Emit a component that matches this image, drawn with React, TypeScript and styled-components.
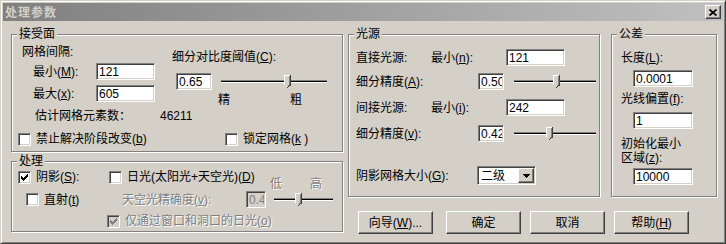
import React from "react";
import styled, { createGlobalStyle, css } from "styled-components";

const face = "#d4d0c8";

const GlobalStyle = createGlobalStyle`
  html, body { margin: 0; padding: 0; background: ${face}; }
  body {
    font-family: "Liberation Sans", "Noto Sans CJK SC", sans-serif;
    font-size: 12px;
    line-height: 14px;
    color: #000;
  }
  u { text-underline-offset: 1px; }
`;

const sunken = css`
  box-sizing: border-box;
  border: 1px solid;
  border-color: #808080 #fff #fff #808080;
  box-shadow: inset 1px 1px #404040, inset -1px -1px ${face};
`;

const raised = css`
  box-sizing: border-box;
  border: 1px solid;
  border-color: #fff #404040 #404040 #fff;
  box-shadow: inset -1px -1px #808080;
  background: ${face};
`;

const disabledText = css`
  color: #808080;
  text-shadow: 1px 1px #fff;
`;

const Window = styled.div`
  box-sizing: border-box;
  width: 726px;
  height: 244px;
  padding: 2px;
  background: ${face};
  border: 1px solid;
  border-color: ${face} #404040 #404040 ${face};
  box-shadow: inset 1px 1px #fff, inset -1px -1px #808080;
`;

const TitleBar = styled.div`
  height: 18px;
  display: flex;
  align-items: center;
  justify-content: space-between;
  padding: 0 2px;
  background: linear-gradient(to right, #808080, #c0c0c0);
`;

const Title = styled.span`
  color: ${face};
  font-weight: bold;
  font-family: "Noto Sans CJK SC", sans-serif;
  letter-spacing: 1px;
`;

const CloseButton = styled.div`
  ${raised}
  width: 16px;
  height: 14px;
  display: flex;
  align-items: center;
  justify-content: center;
`;

const Body = styled.div`
  display: flex;
  gap: 5px;
  padding: 6px 0 0 8px;
`;

const LeftColumn = styled.div`
  width: 332px;
  display: flex;
  flex-direction: column;
  gap: 2px;
`;

const RightColumn = styled.div`
  display: flex;
  flex-direction: column;
`;

const GroupRow = styled.div`
  display: flex;
  align-items: flex-start;
  gap: 11px;
`;

const Group = styled.fieldset<{ $w: number; $pb: number }>`
  box-sizing: border-box;
  width: ${p => p.$w}px;
  margin: 0;
  padding: 0 0 ${p => p.$pb}px;
  min-inline-size: 0;
  border: 1px solid #808080;
  box-shadow: inset 1px 1px #fff, 1px 1px #fff;
`;

const Legend = styled.legend`
  margin-left: 5px;
  padding: 0 2px;
  line-height: 14px;
  background: ${face};
`;

const Split = styled.div`
  display: flex;
  height: 83px;
`;

const Stack = styled.div<{ $w?: number; $ml?: number }>`
  display: flex;
  flex-direction: column;
  flex: none;
  ${p => p.$w && `width: ${p.$w}px;`}
  margin-left: ${p => p.$ml ?? 0}px;
  white-space: nowrap;
`;

const Caption = styled.div<{ $mt: number; $ml?: number }>`
  margin: ${p => p.$mt}px 0 0 ${p => p.$ml ?? 0}px;
  white-space: nowrap;
`;

const Row = styled.div<{ $mt: number; $pl?: number; $h?: number; $top?: boolean }>`
  display: flex;
  align-items: ${p => (p.$top ? "flex-start" : "center")};
  height: ${p => p.$h ?? 17}px;
  margin-top: ${p => p.$mt}px;
  padding-left: ${p => p.$pl ?? 0}px;
  white-space: nowrap;
`;

const Label = styled.span<{ $w?: number; $off?: boolean }>`
  flex: none;
  ${p => p.$w && `width: ${p.$w}px;`}
  ${p => p.$off && disabledText}
`;

const TextBox = styled.input<{ $w: number; $ml?: number }>`
  ${sunken}
  flex: none;
  width: ${p => p.$w}px;
  height: 17px;
  margin: 0 0 0 ${p => p.$ml ?? 0}px;
  padding: 0 1px 0 2px;
  font: inherit;
  color: #000;
  background: #fff;
  outline: none;
  &:disabled {
    background: ${face};
    color: #808080;
  }
`;

const Scale = styled.div<{ $w: number; $ml?: number; $mt?: number; $off?: boolean }>`
  display: flex;
  justify-content: space-between;
  width: ${p => p.$w}px;
  margin: ${p => p.$mt ?? 0}px 0 0 ${p => p.$ml ?? 0}px;
  line-height: 12px;
  flex: none;
  ${p => p.$off && css`align-self: flex-end; ${disabledText}`}
`;

const CheckWrap = styled.label<{ $w?: number; $off?: boolean }>`
  display: flex;
  align-items: center;
  gap: 5px;
  height: 14px;
  flex: none;
  ${p => p.$w && `width: ${p.$w}px;`}
  white-space: nowrap;
  ${p => p.$off && disabledText}
`;

const CheckBox = styled.span<{ $off?: boolean }>`
  ${sunken}
  width: 13px;
  height: 13px;
  flex: none;
  display: flex;
  align-items: center;
  justify-content: center;
  background: ${p => (p.$off ? face : "#fff")};
`;

const SliderBox = styled.div<{ $w: number; $ml: number }>`
  position: relative;
  flex: none;
  width: ${p => p.$w}px;
  height: 17px;
  margin-left: ${p => p.$ml}px;
  display: flex;
  align-items: center;
`;

const Channel = styled.div`
  box-sizing: border-box;
  width: 100%;
  height: 3px;
  background: #000;
  border-top: 1px solid #808080;
  border-bottom: 1px solid #fff;
`;

const Thumb = styled.svg<{ $at: number }>`
  position: absolute;
  top: 2px;
  left: ${p => p.$at}px;
`;

const Combo = styled.div`
  ${sunken}
  width: 59px;
  height: 19px;
  padding: 1px;
  display: flex;
  align-items: center;
  background: #fff;
  flex: none;
`;

const ComboText = styled.span`
  flex: 1;
  padding-left: 2px;
`;

const ComboButton = styled.span`
  ${raised}
  width: 16px;
  height: 15px;
  display: flex;
  align-items: center;
  justify-content: center;
`;

const ButtonRow = styled.div`
  display: flex;
  gap: 9px;
  margin-top: 14px;
  padding-left: 10px;
`;

const Button = styled.button<{ $gapAfter?: number }>`
  ${raised}
  width: 75px;
  height: 23px;
  margin: 0 ${p => p.$gapAfter ?? 0}px 0 0;
  padding: 0;
  font: inherit;
  color: #000;
`;

const Mark = ({ off }: { off?: boolean }) => {
  const cols = [2, 3, 4, 3, 2, 1, 0];
  return (
    <svg width="7" height="7" shapeRendering="crispEdges">
      {cols.map((y, x) => (
        <rect key={x} x={x} y={y} width="1" height="3" fill={off ? "#808080" : "#000"} />
      ))}
    </svg>
  );
};

const Check = (props: { w?: number; checked?: boolean; off?: boolean; children: React.ReactNode }) => (
  <CheckWrap $w={props.w} $off={props.off}>
    <CheckBox $off={props.off}>{props.checked && <Mark off={props.off} />}</CheckBox>
    <span>{props.children}</span>
  </CheckWrap>
);

const Slider = ({ w, ml, at }: { w: number; ml: number; at: number }) => (
  <SliderBox $w={w} $ml={ml}>
    <Channel />
    <Thumb $at={at} width="7" height="13" viewBox="0 0 7 13" shapeRendering="crispEdges">
      <polygon points="0,0 7,0 7,10 3.5,13 0,10" fill={face} />
      <polyline points="0.5,10 0.5,0.5 6,0.5" fill="none" stroke="#fff" strokeWidth="1" />
      <polyline points="6.5,0 6.5,10 3.5,12.5" fill="none" stroke="#404040" strokeWidth="1" />
      <polyline points="5.5,1 5.5,9.5 3.5,11.5" fill="none" stroke="#808080" strokeWidth="1" />
    </Thumb>
  </SliderBox>
);

export default function App() {
  return (
    <>
      <GlobalStyle />
      <Window>
        <TitleBar>
          <Title>处理参数</Title>
          <CloseButton>
            <svg width="8" height="7" viewBox="0 0 8 7">
              <path d="M0.5 0.5 L7.5 6.5 M7.5 0.5 L0.5 6.5" stroke="#000" strokeWidth="1.7" />
            </svg>
          </CloseButton>
        </TitleBar>
        <Body>
          <LeftColumn>
            <Group $w={332} $pb={5}>
              <Legend>接受面</Legend>
              <Split>
                <Stack $w={150} $ml={10}>
                  <Caption $mt={4}>网格间隔:</Caption>
                  <Row $mt={4} $pl={11}>
                    <Label $w={63}>最小(<u>M</u>):</Label>
                    <TextBox $w={59} defaultValue="121" />
                  </Row>
                  <Row $mt={5} $pl={11}>
                    <Label $w={63}>最大(<u>x</u>):</Label>
                    <TextBox $w={59} defaultValue="605" />
                  </Row>
                  <Row $mt={7} $pl={13} $h={14}>
                    <Label $w={125}>估计网格元素数：</Label>
                    <Label>46211</Label>
                  </Row>
                </Stack>
                <Stack>
                  <Caption $mt={9}>细分对比度阈值(<u>C</u>):</Caption>
                  <Row $mt={9} $pl={4}>
                    <TextBox $w={36} defaultValue="0.65" />
                    <Slider w={106} ml={9} at={63} />
                  </Row>
                  <Scale $w={84} $ml={46} $mt={4}>
                    <span>精</span>
                    <span>粗</span>
                  </Scale>
                </Stack>
              </Split>
              <Row $mt={8} $pl={6} $h={14}>
                <Check w={207}>禁止解决阶段改变(<u>b</u>)</Check>
                <Check>锁定网格(<u>k</u> )</Check>
              </Row>
            </Group>

            <Group $w={332} $pb={3}>
              <Legend>处理</Legend>
              <Row $mt={2} $pl={6} $h={20} $top>
                <Check w={91} checked>阴影(<u>S</u>):</Check>
                <Check w={161}>日光(太阳光+天空光)(<u>D</u>)</Check>
                <Scale $w={52} $off>
                  <span>低</span>
                  <span>高</span>
                </Scale>
              </Row>
              <Row $mt={1} $pl={14}>
                <Check w={96}>直射(<u>t</u>)</Check>
                <Label $w={124} $off>天空光精确度(<u>v</u>):</Label>
                <TextBox $w={20} defaultValue="0.40" disabled />
                <Slider w={59} ml={8} at={21} />
              </Row>
              <Row $mt={6} $pl={95} $h={14}>
                <Check checked off>仅通过窗口和洞口的日光(<u>o</u>)</Check>
              </Row>
            </Group>
          </LeftColumn>

          <RightColumn>
            <GroupRow>
              <Group $w={252} $pb={11}>
                <Legend>光源</Legend>
                <Stack $ml={7}>
                  <Row $mt={8}>
                    <Label $w={75}>直接光源:</Label>
                    <Label $w={75}>最小(<u>n</u>):</Label>
                    <TextBox $w={59} defaultValue="121" />
                  </Row>
                  <Row $mt={7}>
                    <Label $w={122}>细分精度(<u>A</u>):</Label>
                    <TextBox $w={26} defaultValue="0.50" />
                    <Slider w={82} ml={10} at={39} />
                  </Row>
                  <Row $mt={9}>
                    <Label $w={75}>间接光源:</Label>
                    <Label $w={75}>最小(<u>i</u>):</Label>
                    <TextBox $w={59} defaultValue="242" />
                  </Row>
                  <Row $mt={9}>
                    <Label $w={122}>细分精度(<u>v</u>):</Label>
                    <TextBox $w={26} defaultValue="0.42" />
                    <Slider w={82} ml={10} at={32} />
                  </Row>
                  <Row $mt={24} $h={19}>
                    <Label $w={121}>阴影网格大小(<u>G</u>):</Label>
                    <Combo>
                      <ComboText>二级</ComboText>
                      <ComboButton>
                        <svg width="7" height="4" viewBox="0 0 7 4" shapeRendering="crispEdges">
                          <polygon points="0,0 7,0 3.5,4" fill="#000" />
                        </svg>
                      </ComboButton>
                    </Combo>
                  </Row>
                </Stack>
              </Group>

              <Group $w={106} $pb={11}>
                <Legend>公差</Legend>
                <Stack $ml={9}>
                  <Caption $mt={10}>长度(<u>L</u>):</Caption>
                  <Row $mt={5} $pl={12}>
                    <TextBox $w={60} defaultValue="0.0001" />
                  </Row>
                  <Caption $mt={5}>光线偏置(<u>f</u>):</Caption>
                  <Row $mt={6} $pl={12}>
                    <TextBox $w={60} defaultValue="1" />
                  </Row>
                  <Caption $mt={8}>
                    初始化最小
                    <br />
                    区域(<u>z</u>):
                  </Caption>
                  <Row $mt={3} $pl={12}>
                    <TextBox $w={60} defaultValue="10000" />
                  </Row>
                </Stack>
              </Group>
            </GroupRow>

            <ButtonRow>
              <Button $gapAfter={4}>向导(<u>W</u>)...</Button>
              <Button>确定</Button>
              <Button>取消</Button>
              <Button>帮助(<u>H</u>)</Button>
            </ButtonRow>
          </RightColumn>
        </Body>
      </Window>
    </>
  );
}
